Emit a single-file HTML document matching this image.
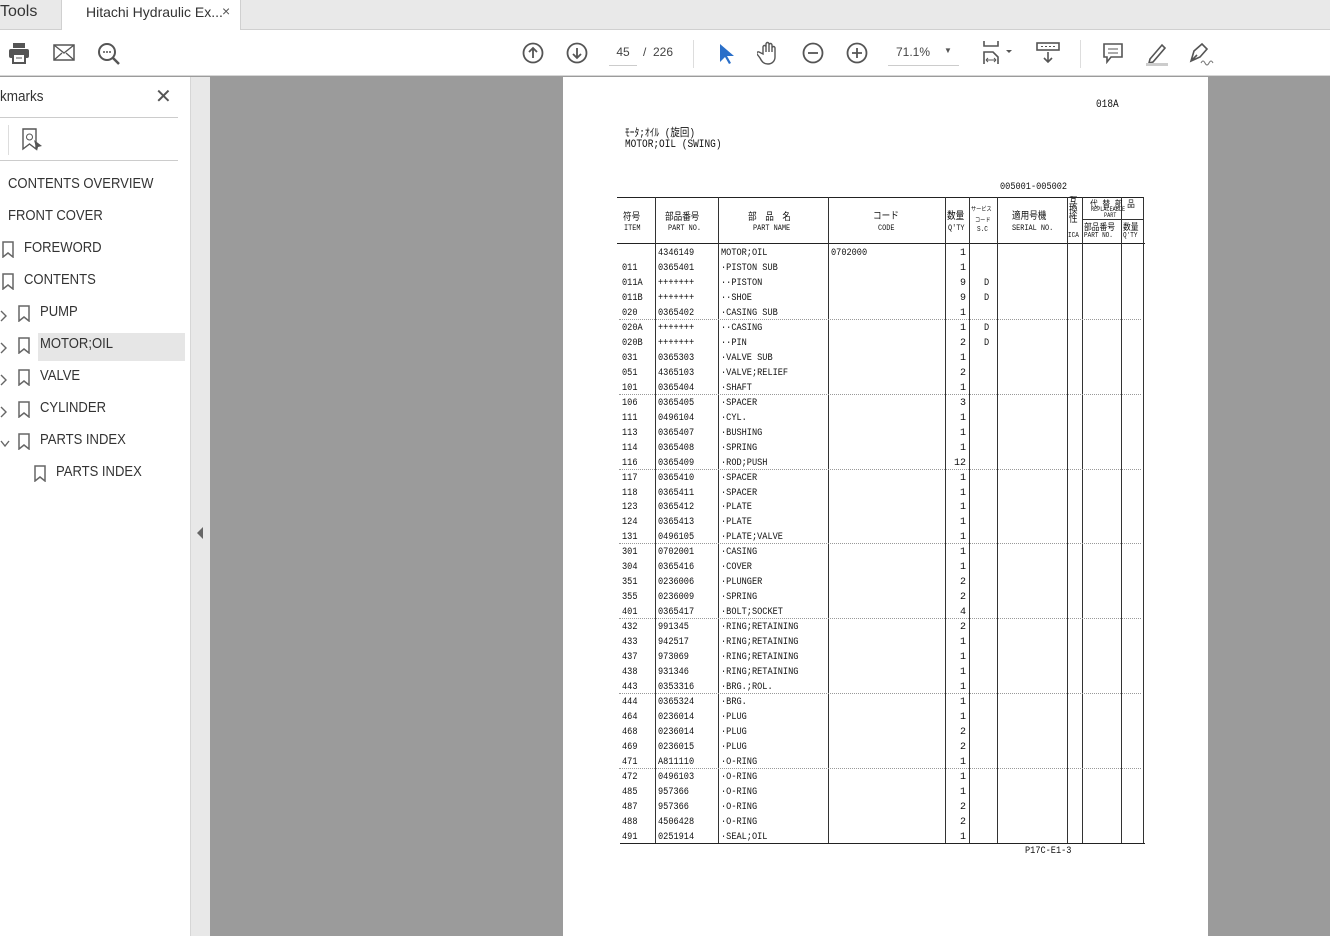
<!DOCTYPE html>
<html><head><meta charset="utf-8">
<style>
*{margin:0;padding:0;box-sizing:border-box}
body{width:1330px;height:936px;overflow:hidden;background:#9b9b9b;font-family:"Liberation Sans","Noto Sans CJK JP",sans-serif;position:relative}
.abs{position:absolute}
#tabs{left:0;top:0;width:1330px;height:30px;background:#e9e9e9;border-bottom:1px solid #d0d0d0}
#tb{left:0;top:30px;width:1330px;height:46px;background:#fff;border-bottom:1px solid #d6d6d6}
#side{left:0;top:77px;width:191px;height:859px;background:#fff;border-right:1px solid #d6d6d6}
#strip{left:191px;top:77px;width:19px;height:859px;background:#e8e8e8}
#page{left:563px;top:77px;width:645px;height:859px;background:#fff}
.bm{position:absolute;font-size:14.5px;color:#333;transform:scaleX(.9);transform-origin:left;white-space:nowrap}
.pg{position:absolute;font-family:"Liberation Mono","Noto Sans CJK JP",monospace;font-size:10px;color:#111;white-space:nowrap;transform:scaleX(.86);transform-origin:left}
svg.i{position:absolute}
</style></head><body>
<div id="tabs" class="abs"></div>
<div class="abs" style="left:0;top:3px;font-size:16px;color:#333">Tools</div>
<div class="abs" style="left:61px;top:0;width:180px;height:31px;background:#fff;border-left:1px solid #d0d0d0;border-right:1px solid #d0d0d0"></div>
<div class="abs" style="left:86px;top:4px;font-size:14px;color:#333">Hitachi Hydraulic Ex...</div>
<div class="abs" style="left:222px;top:3px;font-size:14px;color:#555">×</div>
<div id="tb" class="abs"></div>
<svg class="i" style="left:8px;top:42px" width="22" height="22" viewBox="0 0 22 22"><rect x="5" y="1" width="12" height="5" fill="#555"/><rect x="1" y="7" width="20" height="9" rx="2" fill="#555"/><rect x="5" y="12" width="12" height="9" fill="#fff" stroke="#555" stroke-width="2"/><path d="M8 16h6" stroke="#555"/></svg>
<svg class="i" style="left:53px;top:44px" width="22" height="18"><rect x="1" y="1" width="20" height="15" fill="none" stroke="#555" stroke-width="1.5"/><path d="M1 1l10 8 10-8M1 16l8-7M21 16l-8-7" fill="none" stroke="#555" stroke-width="1.3"/></svg>
<svg class="i" style="left:97px;top:42px" width="24" height="24"><circle cx="10" cy="10" r="8" fill="none" stroke="#555" stroke-width="2"/><path d="M16 16l6 6" stroke="#555" stroke-width="2.5"/><circle cx="7" cy="10" r="1" fill="#555"/><circle cx="10" cy="10" r="1" fill="#555"/><circle cx="13" cy="10" r="1" fill="#555"/></svg>
<svg class="i" style="left:522px;top:42px" width="22" height="22"><circle cx="11" cy="11" r="9.5" fill="none" stroke="#555" stroke-width="1.8"/><path d="M11 16V6M7 10l4-4 4 4" fill="none" stroke="#555" stroke-width="1.8"/></svg>
<svg class="i" style="left:566px;top:42px" width="22" height="22"><circle cx="11" cy="11" r="9.5" fill="none" stroke="#555" stroke-width="1.8"/><path d="M11 6v10M7 12l4 4 4-4" fill="none" stroke="#555" stroke-width="1.8"/></svg>
<div class="abs" style="left:609px;top:45px;width:28px;height:21px;border-bottom:1px solid #ccc;font-size:12px;color:#444;text-align:center">45</div>
<div class="abs" style="left:643px;top:45px;font-size:12px;color:#444">/ &nbsp;226</div>
<div class="abs" style="left:693px;top:40px;width:1px;height:28px;background:#ddd"></div>
<svg class="i" style="left:718px;top:43px" width="16" height="22"><path d="M2 1v18l5-5 4 7 2-1-4-7h7z" fill="#2a6fc9"/></svg>
<svg class="i" style="left:757px;top:40px" width="24" height="26"><path d="M6 14V7a1.5 1.5 0 013 0v5V4a1.5 1.5 0 013 0v8V5a1.5 1.5 0 013 0v7V8a1.5 1.5 0 013 0v9c0 4-3 7-7 7s-6-2-8-6l-3-4a1.5 1.5 0 012-2z" fill="none" stroke="#555" stroke-width="1.4"/></svg>
<svg class="i" style="left:802px;top:42px" width="22" height="22"><circle cx="11" cy="11" r="9.5" fill="none" stroke="#555" stroke-width="1.8"/><path d="M6 11h10" stroke="#555" stroke-width="1.8"/></svg>
<svg class="i" style="left:846px;top:42px" width="22" height="22"><circle cx="11" cy="11" r="9.5" fill="none" stroke="#555" stroke-width="1.8"/><path d="M6 11h10M11 6v10" stroke="#555" stroke-width="1.8"/></svg>
<div class="abs" style="left:888px;top:45px;width:71px;height:21px;border-bottom:1px solid #ccc;font-size:12px;color:#444;padding-left:8px">71.1%</div>
<div class="abs" style="left:944px;top:46px;font-size:8px;color:#555">▼</div>
<svg class="i" style="left:982px;top:40px" width="34" height="26"><path d="M2 1v5h14V1M2 24v-12h9l5 5v7" fill="none" stroke="#555" stroke-width="1.6"/><path d="M4 20h10M4 20l2-2M4 20l2 2M14 20l-2-2M14 20l-2 2" stroke="#555" stroke-width="1"/><path d="M24 10l6 0-3 3z" fill="#555"/></svg>
<svg class="i" style="left:1036px;top:41px" width="24" height="24"><rect x="1" y="2" width="22" height="7" fill="none" stroke="#555" stroke-width="1.6"/><path d="M5 5.5h2M9 5.5h2M13 5.5h2M17 5.5h2" stroke="#555"/><path d="M12 11v10M8 17l4 4 4-4" fill="none" stroke="#555" stroke-width="1.6"/></svg>
<div class="abs" style="left:1080px;top:40px;width:1px;height:28px;background:#ddd"></div>
<svg class="i" style="left:1102px;top:42px" width="22" height="22"><path d="M2 2h18v13H9l-4 5v-5H2z" fill="none" stroke="#555" stroke-width="1.6"/><path d="M6 7h10M6 11h10" stroke="#555"/></svg>
<svg class="i" style="left:1144px;top:41px" width="26" height="26"><path d="M6 18l12-14 3 3-12 14-4 1z" fill="none" stroke="#555" stroke-width="1.6"/><rect x="2" y="22" width="22" height="3" fill="#ccc"/></svg>
<svg class="i" style="left:1187px;top:41px" width="28" height="26"><path d="M4 20l3-10 8-7 5 5-7 8z M4 20l6-6" fill="none" stroke="#555" stroke-width="1.6"/><path d="M14 22q2-4 4 0t4 0 4 0" fill="none" stroke="#777"/></svg>
<div id="side" class="abs"></div>
<div class="bm" style="left:0;top:88px;font-size:15px">kmarks</div>
<div class="abs" style="left:155px;top:84px;font-size:20px;color:#555">✕</div>
<div class="abs" style="left:0;top:117px;width:178px;height:1px;background:#ccc"></div>
<div class="abs" style="left:8px;top:125px;width:1px;height:30px;background:#ddd"></div>
<svg class="i" style="left:20px;top:128px" width="24" height="24"><path d="M3 1h13v20l-6.5-5L3 21z" fill="none" stroke="#555" stroke-width="1.4"/><circle cx="9.5" cy="9" r="3" fill="none" stroke="#555"/><path d="M14 12l8 6-4 1-1 4z" fill="#555"/></svg>
<div class="abs" style="left:0;top:160px;width:178px;height:1px;background:#ccc"></div>
<div class="bm" style="left:8px;top:176px">CONTENTS OVERVIEW</div>
<div class="bm" style="left:8px;top:208px">FRONT COVER</div>
<div class="abs" style="left:38px;top:333px;width:147px;height:28px;background:#e6e6e6"></div>
<div id="bms"></div>
<div id="strip" class="abs"></div>
<div class="abs" style="left:197px;top:527px;width:0;height:0;border-top:6px solid transparent;border-bottom:6px solid transparent;border-right:6px solid #666"></div>
<div id="page" class="abs"></div>
<div id="pc"></div>
<script>
var s='',b=[['FOREWORD',240,0,0],['CONTENTS',272,0,0],['PUMP',304,1,'>'],['MOTOR;OIL',336,1,'>'],['VALVE',368,1,'>'],['CYLINDER',400,1,'>'],['PARTS INDEX',432,1,'v'],['PARTS INDEX',464,2,0]];
b.forEach(function(r){var x=r[2]==0?0:r[2]==1?16:32;
if(r[3]=='>')s+='<svg class="i" style="left:0;top:'+(r[1]+6)+'px" width="8" height="12"><path d="M1 1l5 5-5 5" fill="none" stroke="#666" stroke-width="1.4"/></svg>';
if(r[3]=='v')s+='<svg class="i" style="left:0;top:'+(r[1]+8)+'px" width="10" height="8"><path d="M1 1l4 5 4-5" fill="none" stroke="#666" stroke-width="1.4"/></svg>';
s+='<svg class="i" style="left:'+(x+2)+'px;top:'+(r[1]+1)+'px" width="12" height="17"><path d="M1 1h10v15l-5-4-5 4z" fill="none" stroke="#666" stroke-width="1.5"/></svg>';
s+='<div class="bm" style="left:'+(x+24)+'px;top:'+r[1]+'px">'+r[0]+'</div>';});
document.getElementById('bms').innerHTML=s;
var p='';function t(x,y,txt,st){p+='<div class="pg" style="left:'+x+'px;top:'+y+'px;'+(st||'')+'">'+txt+'</div>';}
function L(x,y,w,h,c){p+='<div class="abs" style="left:'+x+'px;top:'+y+'px;width:'+w+'px;height:'+h+'px;background:'+(c||'#222')+'"></div>';}
t(1096,99,'018A','font-size:11px');t(625,124,'ﾓｰﾀ;ｵｲﾙ (旋回)','font-size:11px');t(625,139,'MOTOR;OIL (SWING)','font-size:11px');
t(1000,182,'005001-005002');
L(617,197,526,1);L(617,243,528,1);L(620,843,525,1);
[655,718,828,945,969,997,1067,1082,1121,1143].forEach(function(x){L(x,197,1,646,'#333')});
L(1082,219,61,1,'#333');
t(623,208,'符号');t(624,224,'ITEM','font-size:8px');t(665,208,'部品番号');t(668,224,'PART NO.','font-size:8px');
t(748,208,'部　品　名');t(753,224,'PART NAME','font-size:8px');t(873,207,'コード');t(878,224,'CODE','font-size:8px');
t(947,207,'数量');t(948,224,"Q'TY",'font-size:8px');t(971,204,'サービス','font-size:6px');t(975,215,'コード','font-size:6px');t(977,226,'S.C','font-size:7px');
t(1012,207,'適用号機');t(1012,224,'SERIAL NO.','font-size:8px');t(1069,198,'互<br>換<br>性','line-height:9px');t(1068,232,'ICA','font-size:7px');
t(1090,197,'代 替 部 品','font-size:9px');t(1091,206,'REPLACEABLE','font-size:6px');t(1104,212,'PART','font-size:6px');t(1084,220,'部品番号','font-size:9px');t(1123,220,'数量','font-size:9px');t(1084,232,'PART NO.','font-size:7px');t(1123,232,"Q'TY",'font-size:7px');
var rows=[['','4346149','MOTOR;OIL',1,''],['011','0365401','·PISTON SUB',1],['011A','+++++++','··PISTON',9,'D'],['011B','+++++++','··SHOE',9,'D'],['020','0365402','·CASING SUB',1],['020A','+++++++','··CASING',1,'D'],['020B','+++++++','··PIN',2,'D'],['031','0365303','·VALVE SUB',1],['051','4365103','·VALVE;RELIEF',2],['101','0365404','·SHAFT',1],['106','0365405','·SPACER',3],['111','0496104','·CYL.',1],['113','0365407','·BUSHING',1],['114','0365408','·SPRING',1],['116','0365409','·ROD;PUSH',12],['117','0365410','·SPACER',1],['118','0365411','·SPACER',1],['123','0365412','·PLATE',1],['124','0365413','·PLATE',1],['131','0496105','·PLATE;VALVE',1],['301','0702001','·CASING',1],['304','0365416','·COVER',1],['351','0236006','·PLUNGER',2],['355','0236009','·SPRING',2],['401','0365417','·BOLT;SOCKET',4],['432','991345','·RING;RETAINING',2],['433','942517','·RING;RETAINING',1],['437','973069','·RING;RETAINING',1],['438','931346','·RING;RETAINING',1],['443','0353316','·BRG.;ROL.',1],['444','0365324','·BRG.',1],['464','0236014','·PLUG',1],['468','0236014','·PLUG',2],['469','0236015','·PLUG',2],['471','A811110','·O-RING',1],['472','0496103','·O-RING',1],['485','957366','·O-RING',1],['487','957366','·O-RING',2],['488','4506428','·O-RING',2],['491','0251914','·SEAL;OIL',1]];
rows.forEach(function(r,i){var y=248+i*14.97;t(622,y,r[0]);t(658,y,r[1]);t(721,y,r[2]);if(i==0)t(831,y,'0702000');
p+='<div class="pg" style="left:940px;top:'+y+'px;width:26px;text-align:right;transform:none">'+r[3]+'</div>';if(r[4])t(984,y,r[4]);
if(i%5==4&&i<39)p+='<div class="abs" style="left:619px;top:'+Math.round(y+11)+'px;width:522px;border-top:1px dotted #999"></div>';});
t(1025,846,'P17C-E1-3');
document.getElementById('pc').innerHTML=p;
</script>
</body></html>
